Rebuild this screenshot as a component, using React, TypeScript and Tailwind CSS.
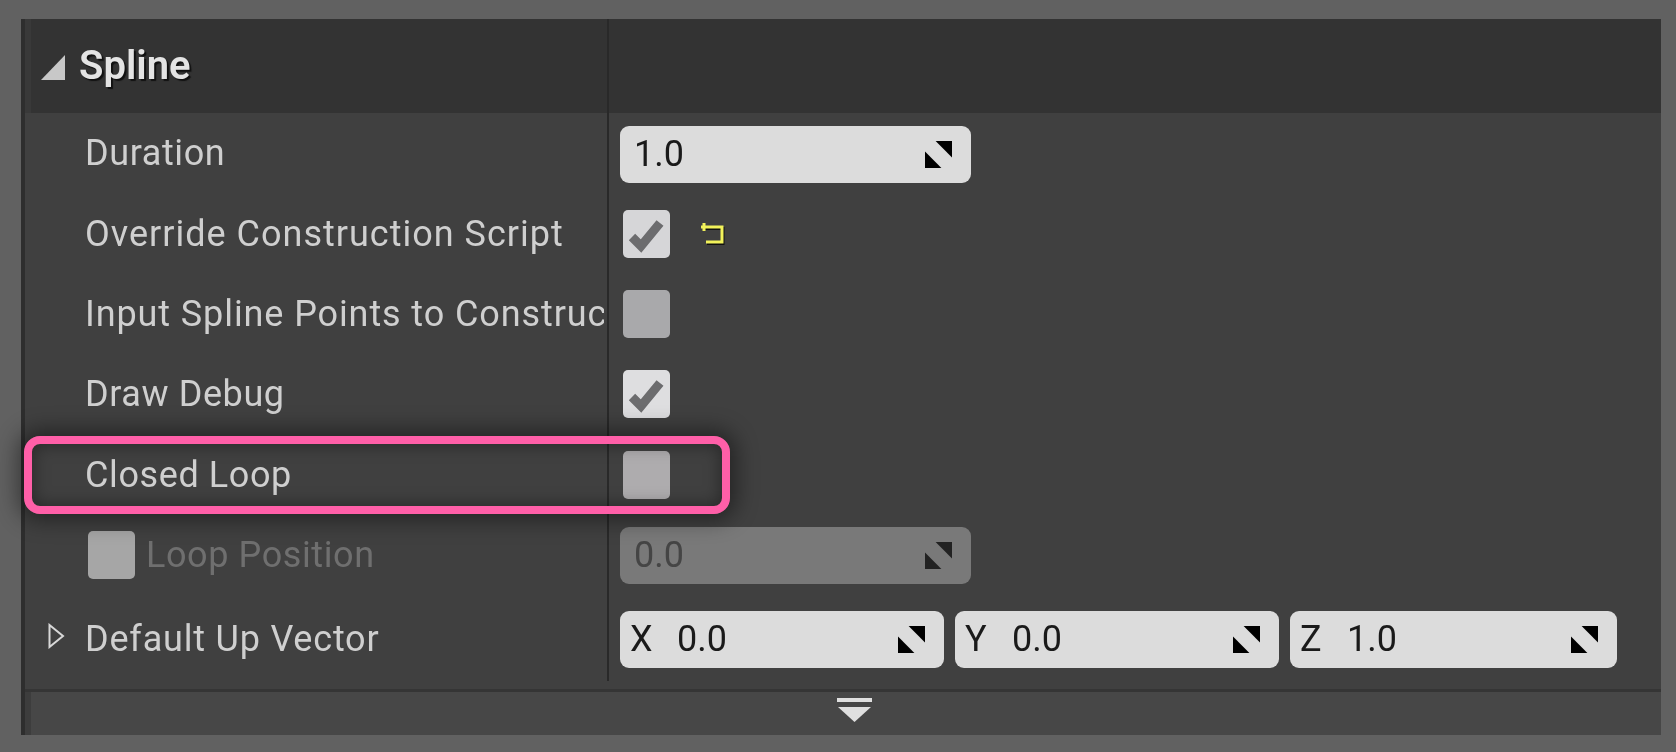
import React from "react";

function Spinner({ dim }: { dim?: boolean }) {
  return (
    <svg viewBox="0 0 28 28" className="w-[27px] h-[27px] shrink-0">
      <path d="M11 0H28V17Z" fill={dim ? "#222222" : "#000000"} />
      <path d="M0 11L17 28H0Z" fill={dim ? "#222222" : "#000000"} />
    </svg>
  );
}

function Check() {
  return (
    <svg viewBox="0 0 47 48" className="w-full h-full">
      <path d="M9 27L18 36L37 13" fill="none" stroke="#6c6c6e" strokeWidth="9" />
    </svg>
  );
}

function Box({ checked, tone }: { checked?: boolean; tone: string }) {
  return (
    <div className={`w-[47px] h-[48px] rounded-[5px] shrink-0 ${tone}`}>{checked ? <Check /> : null}</div>
  );
}

function NumberField({ value, axis, width, disabled }: { value: string; axis?: string; width: string; disabled?: boolean }) {
  return (
    <div
      className={`h-[57px] rounded-[9px] flex items-center shrink-0 ${width} ${
        disabled ? "bg-[#797979] text-[#454545]" : "bg-[#dcdcdc] text-[#1a1a1a]"
      }`}
    >
      {axis ? <span className="ml-[10px] w-[47px] text-[36px]">{axis}</span> : <span className="ml-[14px]" />}
      <span className="text-[36px]">{value}</span>
      <span className="ml-auto mr-[19px] flex">
        <Spinner dim={disabled} />
      </span>
    </div>
  );
}

function Row({
  label,
  children,
  tall,
  left,
  tracking = "tracking-[0.6px]",
}: {
  label?: string;
  children: React.ReactNode;
  tall?: boolean;
  left?: React.ReactNode;
  tracking?: string;
}) {
  return (
    <div className={`flex ${tall ? "h-[86px] pt-[2px]" : "h-[80.4px]"}`}>
      <div className="w-[583px] mr-[3px] shrink-0 flex items-center overflow-hidden pl-[64px]">
        {left ?? <span className={`whitespace-nowrap text-[36px] text-[#cfcfcf] ${tracking}`}>{label}</span>}
      </div>
      <div className="w-[2px] shrink-0 bg-[#292929] -mt-[2px]" />
      <div className="flex-1 flex items-center pl-[11px] gap-[11px]">{children}</div>
    </div>
  );
}

export default function App() {
  return (
    <div className="relative w-[1676px] h-[752px] bg-[#616161] pt-[19px] pl-[21px] overflow-hidden font-['Roboto',sans-serif]">
      <div className="w-[1640px] h-[716px] bg-[#404040] flex flex-col border-l-[4px] border-[#2e2e2e] blur-[0.7px]">
        <div className="h-[94px] bg-[#333333] flex shrink-0">
          <div className="w-[6px] bg-[#393939] shrink-0" />
          <div className="w-[576px] shrink-0 flex items-center pl-[10px] gap-[14px]">
            <svg viewBox="0 0 24 25" className="w-[24px] h-[25px] mt-[2px]">
              <path d="M24 0V25H0Z" fill="#c8c8c8" />
            </svg>
            <span className="text-[40px] font-semibold text-[#e4e4e4] [text-shadow:2px_2px_1px_#111111]">Spline</span>
          </div>
          <div className="w-[2px] shrink-0 bg-[#292929]" />
        </div>
        <div className="flex flex-col shrink-0 -ml-[4px]">
          <Row label="Duration">
            <div className="mt-[2px]">
              <NumberField value="1.0" width="w-[351px]" />
            </div>
          </Row>
          <Row label="Override Construction Script" tracking="tracking-[1px]">
            <div className="ml-[3px]">
              <Box checked tone="bg-[#d6d6d8]" />
            </div>
            <svg viewBox="0 0 26 26" className="w-[26px] h-[26px] ml-[18px]">
              <path d="M3 6H23V21H7" fill="none" stroke="#111111" strokeWidth="3" transform="translate(1 1.5)" />
              <path d="M2 6H23V21H7M5 2V10" fill="none" stroke="#f2f25a" strokeWidth="3" />
            </svg>
          </Row>
          <Row label="Input Spline Points to Construction Script" tracking="tracking-[0.9px]">
            <div className="ml-[3px]">
              <Box tone="bg-[#a9a9ab]" />
            </div>
          </Row>
          <Row label="Draw Debug">
            <div className="ml-[3px]">
              <Box checked tone="bg-[#dedee0]" />
            </div>
          </Row>
          <Row label="Closed Loop">
            <div className="ml-[3px]">
              <Box tone="bg-[#aeacae]" />
            </div>
          </Row>
          <Row
            left={
              <div className="flex items-center ml-[3px] gap-[11px]">
                <Box tone="bg-[#a6a6a6]" />
                <span className="whitespace-nowrap text-[36px] text-[#6f6f6f] tracking-[0.6px]">Loop Position</span>
              </div>
            }
          >
            <NumberField value="0.0" width="w-[351px]" disabled />
          </Row>
          <Row
            tall
            left={
              <div className="flex items-center -ml-[37px] gap-[20px]">
                <svg viewBox="0 0 17 26" className="w-[17px] h-[26px] -mt-[6px]">
                  <path d="M1.5 2L15 13L1.5 24Z" fill="none" stroke="#d8d8d8" strokeWidth="2" />
                </svg>
                <span className="whitespace-nowrap text-[36px] text-[#cfcfcf] tracking-[0.8px]">Default Up Vector</span>
              </div>
            }
          >
            <NumberField axis="X" value="0.0" width="w-[324px]" />
            <NumberField axis="Y" value="0.0" width="w-[324px]" />
            <NumberField axis="Z" value="1.0" width="w-[327px]" />
          </Row>
        </div>
        <div className="h-[8px] shrink-0" />
        <div className="h-[3px] bg-[#353535] shrink-0" />
        <div className="flex-1 flex">
          <div className="w-[6px] bg-[#3d3d3d] shrink-0" />
          <div className="flex-1 bg-[#474747] flex flex-col items-center pt-[6px]">
            <svg viewBox="0 0 35 24" className="w-[35px] h-[24px] ml-[16px]">
              <path d="M0 0H35V4H0Z" fill="#e0e0e0" />
              <path d="M1 9H34L17.5 24Z" fill="#e0e0e0" />
            </svg>
          </div>
        </div>
      </div>
      <div className="absolute left-[24px] top-[436px] w-[706px] h-[78px] rounded-[16px] border-[8px] border-[#ff5fa8] shadow-[0_0_22px_6px_rgba(0,0,0,0.45),inset_0_0_16px_2px_rgba(0,0,0,0.35)]" />
    </div>
  );
}
